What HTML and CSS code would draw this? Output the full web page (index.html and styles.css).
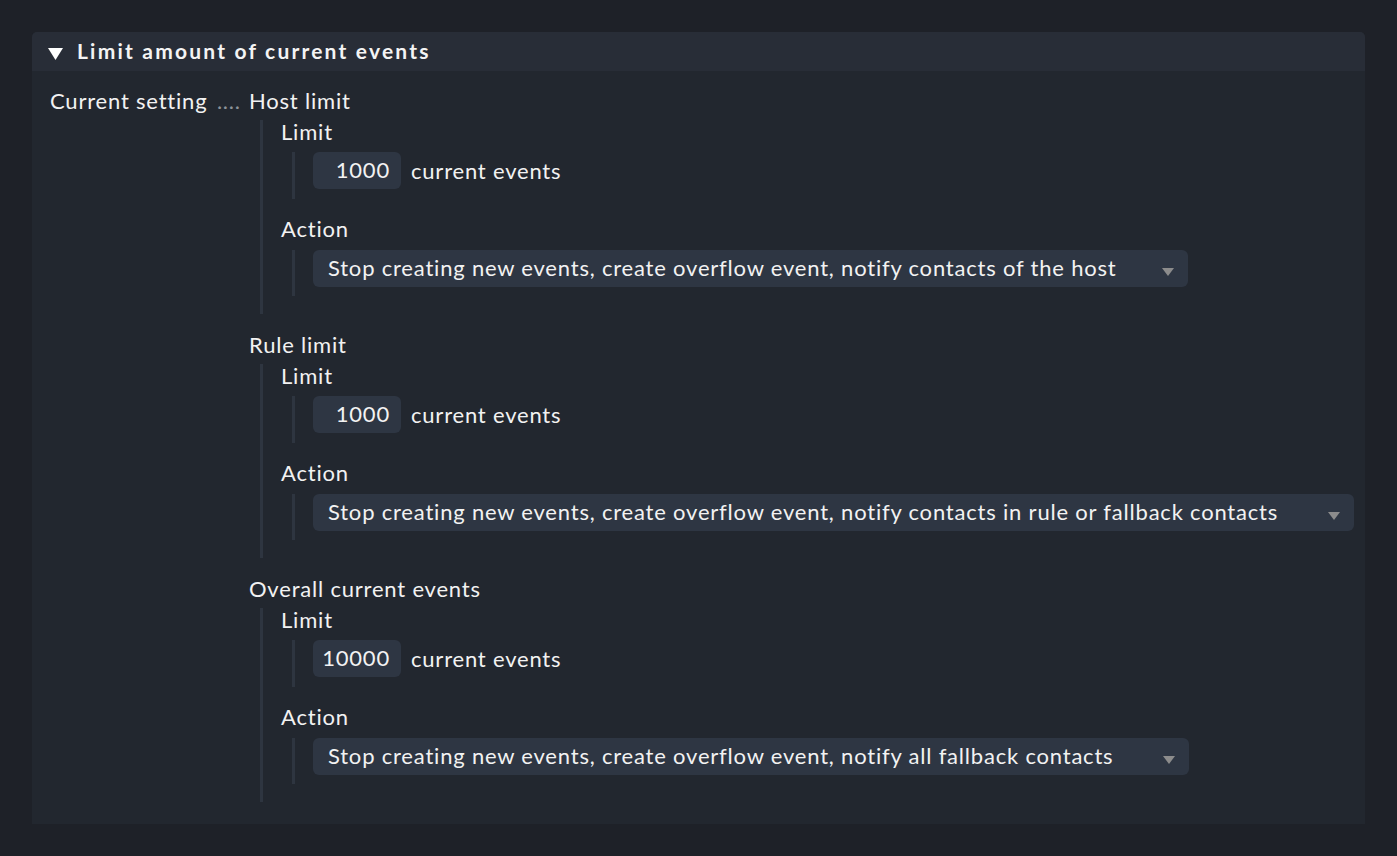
FILE: index.html
```html
<!DOCTYPE html>
<html>
<head>
<meta charset="utf-8">
<link rel="stylesheet" href="styles.css">
</head>
<body>
<div class="panel">
  <div class="panel-head">
    <svg class="caret" width="15" height="12" viewBox="0 0 15 12"><polygon points="0,0 15,0 7.5,12" fill="#ffffff"/></svg>
    <span class="title">Limit amount of current events</span>
  </div>
  <div class="panel-body">
    <div class="setting">
      <div class="setting-label">Current setting <span class="dots">....</span></div>
      <div class="setting-value">
        <div class="group">
          <div class="label">Host limit</div>
          <div class="group-body">
            <div class="item">
              <div class="label">Limit</div>
              <div class="item-body">
                <span class="input">1000</span><span class="unit">current events</span>
              </div>
            </div>
            <div class="item">
              <div class="label">Action</div>
              <div class="item-body">
                <span class="select select-host">Stop creating new events, create overflow event, notify contacts of the host<span class="arrow"></span></span>
              </div>
            </div>
          </div>
        </div>
        <div class="group">
          <div class="label">Rule limit</div>
          <div class="group-body">
            <div class="item">
              <div class="label">Limit</div>
              <div class="item-body">
                <span class="input">1000</span><span class="unit">current events</span>
              </div>
            </div>
            <div class="item">
              <div class="label">Action</div>
              <div class="item-body">
                <span class="select select-rule">Stop creating new events, create overflow event, notify contacts in rule or fallback contacts<span class="arrow"></span></span>
              </div>
            </div>
          </div>
        </div>
        <div class="group">
          <div class="label">Overall current events</div>
          <div class="group-body">
            <div class="item">
              <div class="label">Limit</div>
              <div class="item-body">
                <span class="input">10000</span><span class="unit">current events</span>
              </div>
            </div>
            <div class="item">
              <div class="label">Action</div>
              <div class="item-body">
                <span class="select select-all">Stop creating new events, create overflow event, notify all fallback contacts<span class="arrow"></span></span>
              </div>
            </div>
          </div>
        </div>
      </div>
    </div>
  </div>
</div>
</body>
</html>
```

FILE: styles.css
```css
html, body {
  margin: 0;
  padding: 0;
  background: #1e2128;
}
body {
  padding: 32px 32px 0 32px;
  font-family: Lato, "Noto Sans", sans-serif;
  font-size: 22px;
  letter-spacing: 0.8px;
  color: #f2f2f2;
}
.panel {
  background: #22272f;
  border-radius: 5px 5px 0 0;
}
.panel-head {
  height: 39px;
  background: #282d37;
  border-radius: 5px 5px 0 0;
  display: flex;
  align-items: center;
  padding-left: 16px;
}
.caret {
  display: block;
  margin-top: 4px;
}
.title {
  margin-left: 14px;
  margin-top: -2px;
  font-size: 21px;
  font-weight: bold;
  letter-spacing: 2.2px;
  color: #f4f4f4;
  line-height: 24px;
}
.panel-body {
  padding: 18px 18px 22px 18px;
}
.setting {
  display: flex;
  align-items: flex-start;
}
.setting-label {
  width: 199px;
  flex: none;
  line-height: 24px;
  white-space: nowrap;
}
.dots {
  color: #8d929a;
  margin-left: 3px;
}
.setting-value {
  flex: 1;
}
.label {
  line-height: 24px;
  height: 24px;
}
.group + .group {
  margin-top: 19px;
}
.group-body {
  margin-top: 7px;
  margin-left: 11px;
  border-left: 3px solid #2e3540;
  padding-left: 18px;
  padding-bottom: 18px;
}
.item + .item {
  margin-top: 18px;
}
.item + .item .item-body {
  margin-top: 9px;
}
.item-body {
  margin-top: 8px;
  margin-left: 11px;
  border-left: 3px solid #2e3540;
  padding-left: 18px;
  padding-bottom: 10px;
  display: flex;
  align-items: center;
}
.item + .item .item-body {
  padding-bottom: 9px;
}
.input {
  box-sizing: border-box;
  width: 88px;
  height: 37px;
  background: #2e3643;
  border-radius: 6px;
  text-align: right;
  padding-right: 11px;
  line-height: 36px;
}
.unit {
  margin-left: 10px;
}
.select {
  position: relative;
  box-sizing: border-box;
  height: 37px;
  line-height: 36px;
  background: #2e3643;
  border-radius: 6px;
  padding-left: 15px;
  padding-right: 71px;
  white-space: nowrap;
}
.select-rule {
  padding-right: 76px;
}
.select-all {
  padding-right: 76px;
}
.arrow {
  position: absolute;
  right: 14px;
  top: 18px;
  width: 0;
  height: 0;
  border-left: 6.5px solid transparent;
  border-right: 6.5px solid transparent;
  border-top: 8px solid #8c8c8c;
}
```
